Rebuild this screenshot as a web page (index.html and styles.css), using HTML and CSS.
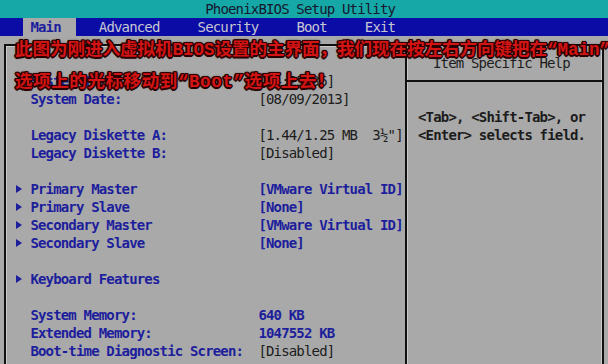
FILE: index.html
```html
<!DOCTYPE html>
<html lang="zh">
<head>
<meta charset="utf-8">
<title>PhoenixBIOS Setup Utility</title>
<link rel="stylesheet" href="styles.css">
</head>
<body>
<div class="bios">
  <header class="title">PhoenixBIOS Setup Utility</header>
  <nav class="menu">
    <span class="tab active">Main</span>
    <span class="tab">Advanced</span>
    <span class="tab">Security</span>
    <span class="tab">Boot</span>
    <span class="tab">Exit</span>
  </nav>
  <main class="frame">
    <section class="items">
      <div class="row"></div>
      <div class="row"><span class="arrow none"></span><span class="label">System Time:</span><span class="value">[14:25:36]</span></div>
      <div class="row"><span class="arrow none"></span><span class="label">System Date:</span><span class="value">[08/09/2013]</span></div>
      <div class="row"></div>
      <div class="row"><span class="arrow none"></span><span class="label">Legacy Diskette A:</span><span class="value">[1.44/1.25 MB  3½"]</span></div>
      <div class="row"><span class="arrow none"></span><span class="label">Legacy Diskette B:</span><span class="value">[Disabled]</span></div>
      <div class="row"></div>
      <div class="row"><span class="arrow"></span><span class="label">Primary Master</span><span class="value sub">[VMware Virtual ID]</span></div>
      <div class="row"><span class="arrow"></span><span class="label">Primary Slave</span><span class="value sub">[None]</span></div>
      <div class="row"><span class="arrow"></span><span class="label">Secondary Master</span><span class="value sub">[VMware Virtual ID]</span></div>
      <div class="row"><span class="arrow"></span><span class="label">Secondary Slave</span><span class="value sub">[None]</span></div>
      <div class="row"></div>
      <div class="row"><span class="arrow"></span><span class="label">Keyboard Features</span></div>
      <div class="row"></div>
      <div class="row"><span class="arrow none"></span><span class="label">System Memory:</span><span class="value sub">640 KB</span></div>
      <div class="row"><span class="arrow none"></span><span class="label">Extended Memory:</span><span class="value sub">1047552 KB</span></div>
      <div class="row"><span class="arrow none"></span><span class="label">Boot-time Diagnostic Screen:</span><span class="value">[Disabled]</span></div>
    </section>
    <aside class="help">
      <div class="help-title">Item Specific Help</div>
      <div class="help-body">
        <p>&lt;Tab&gt;, &lt;Shift-Tab&gt;, or</p>
        <p>&lt;Enter&gt; selects field.</p>
      </div>
    </aside>
  </main>
  <div class="note">
    <p>此图为刚进入虚拟机<span class="lat">BIOS</span>设置的主界面，我们现在按左右方向键把在<span class="lat">“Main”</span></p>
    <p class="second">选项上的光标移动到<span class="lat">“Boot”</span>选项上去！</p>
  </div>
</div>
</body>
</html>
```
FILE: styles.css
```css
:root {
  --c: 7.6px;
  --teal: #15a8a6;
  --blue: #0b0ca6;
  --grey: #a9a9a9;
  --ink: #1d1e9c;
  --dark: #1c1c1c;
}

* { box-sizing: border-box; }

html, body {
  margin: 0;
  padding: 0;
}

body {
  width: 608px;
  height: 364px;
  overflow: hidden;
  background: var(--grey);
  font-family: "DejaVu Sans Mono", "Liberation Mono", monospace;
  font-size: 14px;
  letter-spacing: -0.83px;
  line-height: 18px;
  color: var(--dark);
}

.bios {
  position: relative;
  width: 608px;
  height: 364px;
  overflow: hidden;
  display: flex;
  flex-direction: column;
}

.title {
  height: 18px;
  background: var(--teal);
  padding-left: calc(27 * var(--c));
  color: #15172e;
  white-space: pre;
}

.menu {
  height: 18px;
  background: var(--blue);
  padding-left: calc(3 * var(--c));
  display: flex;
  color: #c6c6d2;
  white-space: pre;
}

.tab {
  margin-left: calc(5 * var(--c));
}

.tab.active {
  margin-left: 0;
  padding: 0 calc(2 * var(--c)) 0 var(--c);
  background: var(--grey);
  color: var(--ink);
  font-weight: bold;
}

.tab.active + .tab {
  margin-left: calc(3 * var(--c));
}

.frame {
  flex: 1;
  margin: 8px 4px 0 4px;
  border: 2px solid #101010;
  border-bottom: none;
  display: flex;
  box-shadow: inset 1px 1px 0 #c9c9c9;
}

.items {
  width: 399px;
  padding-top: 8px;
}

.row {
  height: 18px;
  display: flex;
  align-items: center;
  padding-left: 9.2px;
  white-space: pre;
}

.arrow {
  width: calc(2 * var(--c));
  height: 18px;
  position: relative;
  flex: none;
}

.arrow::before {
  content: "";
  position: absolute;
  left: 1px;
  top: 5px;
  border-left: 6px solid var(--ink);
  border-top: 4px solid transparent;
  border-bottom: 4px solid transparent;
}

.arrow.none::before { display: none; }

.label {
  width: calc(30 * var(--c));
  flex: none;
  color: var(--ink);
  font-weight: bold;
}

.value {
  color: var(--dark);
}

.value.sub {
  color: var(--ink);
  font-weight: bold;
}

.help {
  flex: 1;
  border-left: 2px solid #101010;
  padding-top: 8px;
  box-shadow: inset 1px 0 0 #c9c9c9, inset -1px 0 0 #c9c9c9;
}

.help-title {
  height: 18px;
  padding-left: 26px;
  white-space: pre;
}

.help-body {
  margin-top: 8px;
  border-top: 2px solid #101010;
  padding-top: 26px;
  padding-left: 11px;
  font-weight: bold;
}

.help-body p {
  margin: 0;
  white-space: pre;
}

.note {
  position: absolute;
  left: 15px;
  top: 33px;
  font-family: "Noto Sans CJK SC", sans-serif;
  font-weight: bold;
  font-size: 17.5px;
  letter-spacing: 0;
  line-height: 30px;
  color: #d21414;
  text-shadow:
    1px 1px 0 #2a0000, -1px -1px 0 #2a0000,
    1px -1px 0 #2a0000, -1px 1px 0 #2a0000,
    0 1.5px 0 #2a0000, 0 -1.5px 0 #2a0000,
    1.5px 0 0 #2a0000, -1.5px 0 0 #2a0000,
    0 0 3px #000;
}

.note p {
  margin: 0;
  white-space: nowrap;
}

.note .second {
  letter-spacing: 0.6px;
}

.note .lat {
  font-family: "Liberation Mono", monospace;
}
```
